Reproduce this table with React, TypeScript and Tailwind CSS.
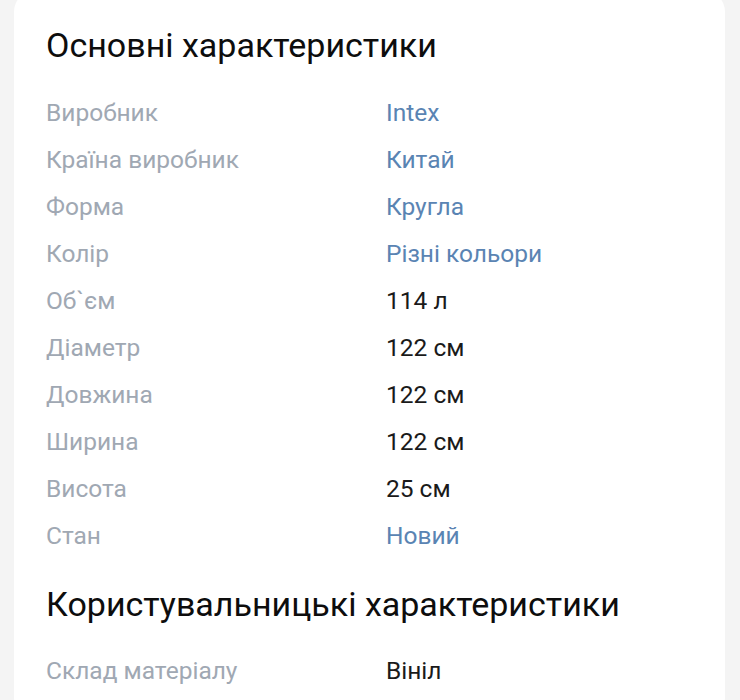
import React from "react";

type Row = { label: string; value: string; link?: boolean };

const main: Row[] = [
  { label: "Виробник", value: "Intex", link: true },
  { label: "Країна виробник", value: "Китай", link: true },
  { label: "Форма", value: "Кругла", link: true },
  { label: "Колір", value: "Різні кольори", link: true },
  { label: "Об`єм", value: "114 л" },
  { label: "Діаметр", value: "122 см" },
  { label: "Довжина", value: "122 см" },
  { label: "Ширина", value: "122 см" },
  { label: "Висота", value: "25 см" },
  { label: "Стан", value: "Новий", link: true },
];

const user: Row[] = [{ label: "Склад матеріалу", value: "Вініл" }];

function Rows({ rows }: { rows: Row[] }) {
  return (
    <div className="flex flex-col">
      {rows.map((r) => (
        <div key={r.label} className="flex h-[47px] items-center text-[24.5px] leading-[30px]">
          <div className="w-[340px] text-[#a0a8b3]">{r.label}</div>
          <div className={r.link ? "text-[#5a84b3]" : "text-[#1a1a1a]"}>{r.value}</div>
        </div>
      ))}
    </div>
  );
}

export default function App() {
  return (
    <div
      className="min-h-[700px] overflow-hidden bg-[#f4f4f4] pl-[14px] pr-[15px]"
      style={{ fontFamily: "Roboto, 'Noto Sans', sans-serif" }}
    >
      <div className="-mt-[10px] min-h-[730px] rounded-[22px] bg-white pl-[32px] pt-[35px]">
        <h2 className="text-[34px] font-normal leading-[40px] text-[#0d0d0d]">Основні характеристики</h2>
        <div className="mt-[24.5px]">
          <Rows rows={main} />
        </div>
        <h2 className="mt-[24.5px] text-[34px] font-normal leading-[40px] text-[#0d0d0d]">
          Користувальницькі характеристики
        </h2>
        <div className="mt-[23.5px]">
          <Rows rows={user} />
        </div>
      </div>
    </div>
  );
}
